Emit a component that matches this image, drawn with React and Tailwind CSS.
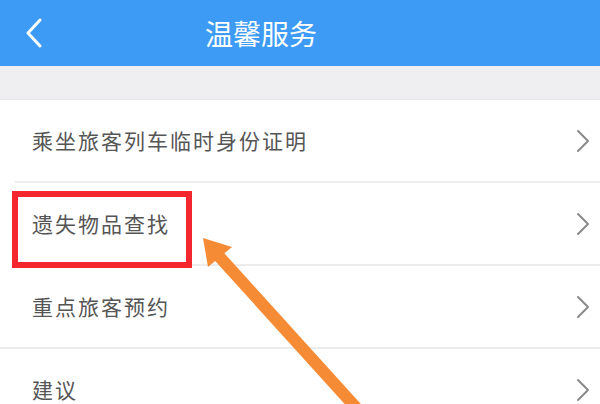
import React from "react";

const rows = [
  { label: "乘坐旅客列车临时身份证明", line: "ml-[15px]" },
  { label: "遗失物品查找", line: "ml-[15px]" },
  { label: "重点旅客预约", line: "ml-0" },
  { label: "建议", line: "ml-0" },
];

function Chevron() {
  return (
    <svg width="14" height="24" viewBox="0 0 14 24" className="shrink-0">
      <path d="M2 2 L12 12 L2 22" fill="none" stroke="#8a8a8a" strokeWidth="2" strokeLinecap="round" strokeLinejoin="round" />
    </svg>
  );
}

export default function App() {
  return (
    <div
      className="relative h-[404px] w-[600px] overflow-hidden bg-white"
      style={{ fontFamily: '"Noto Sans CJK SC", "Noto Sans", sans-serif' }}
    >
      <header className="flex h-[66px] items-center bg-[#3d9bf6]">
        <svg width="18" height="30" viewBox="0 0 18 30" className="ml-[25px] shrink-0">
          <path d="M15 2 L3 15 L15 28" fill="none" stroke="white" strokeWidth="3" strokeLinecap="round" strokeLinejoin="round" />
        </svg>
        <h1 className="ml-[162px] text-[28px] leading-none text-white">温馨服务</h1>
      </header>

      <div className="h-[34px] border-b border-[#e6e6e8] bg-[#efeff2]" />

      <ul>
        {rows.map((row) => (
          <li key={row.label}>
            <div className="flex h-[81px] items-center justify-between pl-[32px] pr-[10px]">
              <span className="text-[21px] tracking-[2px] text-[#555]">{row.label}</span>
              <Chevron />
            </div>
            <div className={`h-[2px] bg-[#ececec] ${row.line}`} />
          </li>
        ))}
      </ul>

      {/* annotation: red box */}
      <div className="pointer-events-none absolute left-[12px] top-[191px] h-[77px] w-[180px] border-[6px] border-[#f3272d]" />

      {/* annotation: arrow */}
      <svg className="pointer-events-none absolute left-0 top-0" width="600" height="404" viewBox="0 0 600 404">
        <line x1="360" y1="412" x2="216" y2="253" stroke="#f68b35" strokeWidth="12" />
        <polygon points="203,238 232,247 208,267" fill="#f68b35" />
      </svg>
    </div>
  );
}
